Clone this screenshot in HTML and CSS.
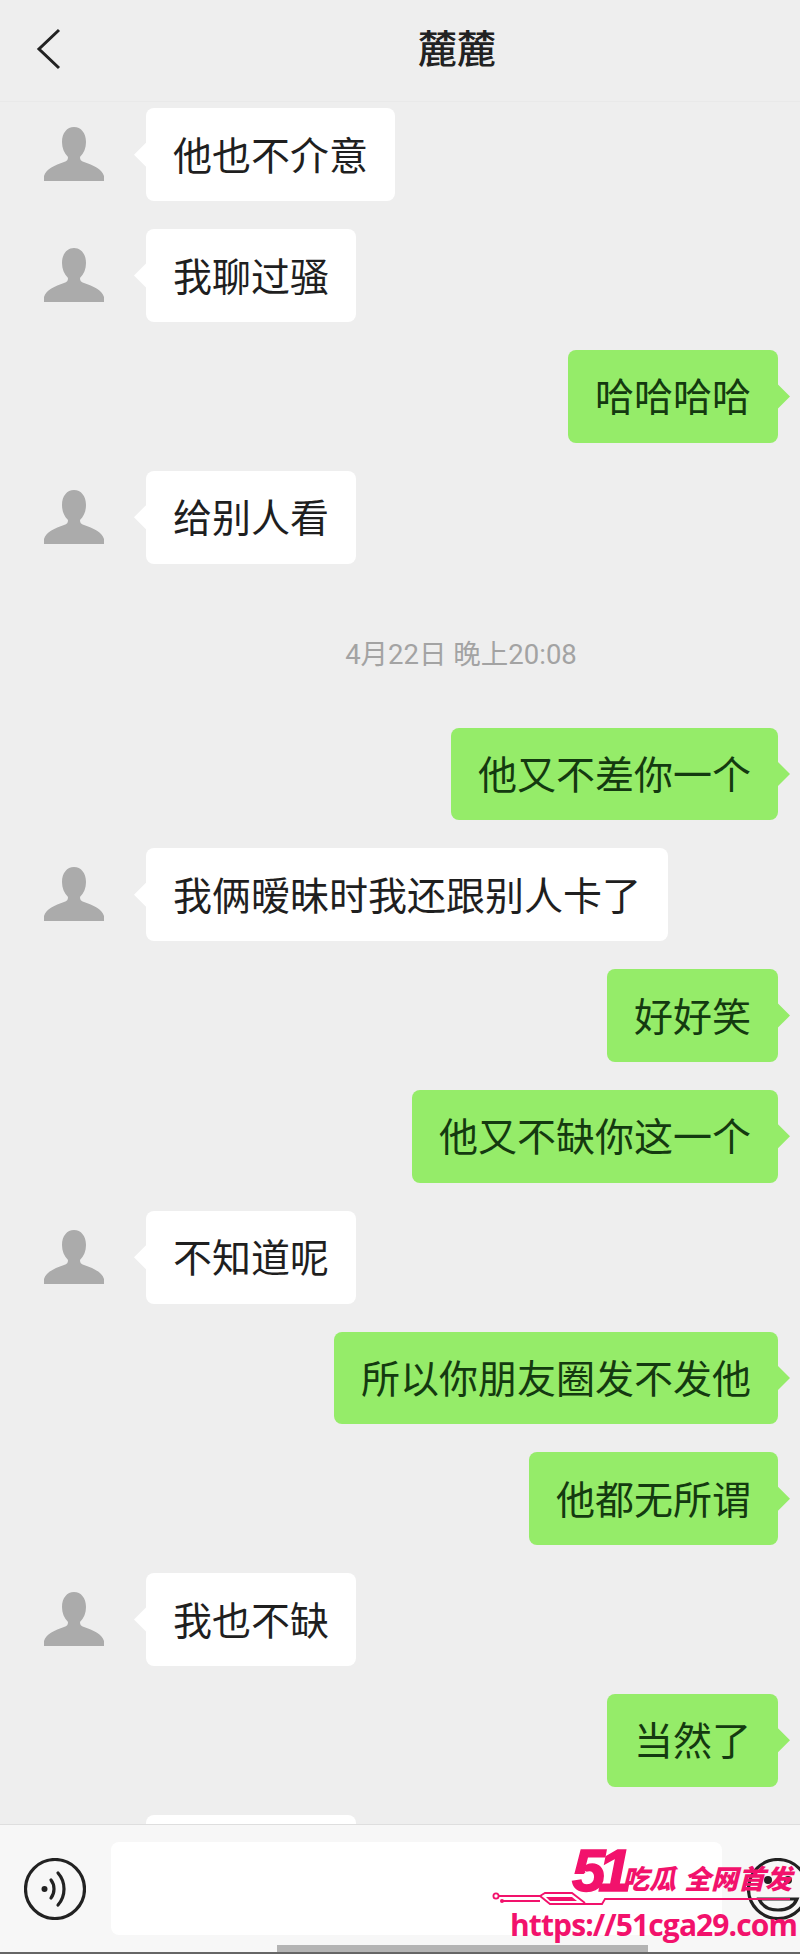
FILE: index.html
```html
<!DOCTYPE html>
<html lang="zh-CN">
<head>
<meta charset="utf-8">
<title>麓麓</title>
<link rel="stylesheet" href="styles.css">
</head>
<body>
<div class="phone">
  <header class="topbar">
    <svg class="back" viewBox="0 0 26 42" aria-hidden="true"><path d="M23 2 3 21 23 40"/></svg>
    <h1 class="title">麓麓</h1>
  </header>
  <main class="messages">
    <div class="msg in"><svg class="avatar" viewBox="0 0 60 54" aria-hidden="true"><path d="M30 0c7 0 12 6 12 15 0 6-2 11-6 15 0 3 1 4 4 5 9 3 18 7 20 14v5H0v-5c2-7 11-11 20-14 3-1 4-2 4-5-4-4-6-9-6-15C18 6 23 0 30 0z"/></svg><div class="bubble">他也不介意</div></div>
    <div class="msg in"><svg class="avatar" viewBox="0 0 60 54" aria-hidden="true"><path d="M30 0c7 0 12 6 12 15 0 6-2 11-6 15 0 3 1 4 4 5 9 3 18 7 20 14v5H0v-5c2-7 11-11 20-14 3-1 4-2 4-5-4-4-6-9-6-15C18 6 23 0 30 0z"/></svg><div class="bubble">我聊过骚</div></div>
    <div class="msg out"><div class="bubble">哈哈哈哈</div></div>
    <div class="msg in"><svg class="avatar" viewBox="0 0 60 54" aria-hidden="true"><path d="M30 0c7 0 12 6 12 15 0 6-2 11-6 15 0 3 1 4 4 5 9 3 18 7 20 14v5H0v-5c2-7 11-11 20-14 3-1 4-2 4-5-4-4-6-9-6-15C18 6 23 0 30 0z"/></svg><div class="bubble">给别人看</div></div>
    <div class="time">4月22日 晚上20:08</div>
    <div class="msg out"><div class="bubble">他又不差你一个</div></div>
    <div class="msg in"><svg class="avatar" viewBox="0 0 60 54" aria-hidden="true"><path d="M30 0c7 0 12 6 12 15 0 6-2 11-6 15 0 3 1 4 4 5 9 3 18 7 20 14v5H0v-5c2-7 11-11 20-14 3-1 4-2 4-5-4-4-6-9-6-15C18 6 23 0 30 0z"/></svg><div class="bubble">我俩暧昧时我还跟别人卡了</div></div>
    <div class="msg out"><div class="bubble">好好笑</div></div>
    <div class="msg out"><div class="bubble">他又不缺你这一个</div></div>
    <div class="msg in"><svg class="avatar" viewBox="0 0 60 54" aria-hidden="true"><path d="M30 0c7 0 12 6 12 15 0 6-2 11-6 15 0 3 1 4 4 5 9 3 18 7 20 14v5H0v-5c2-7 11-11 20-14 3-1 4-2 4-5-4-4-6-9-6-15C18 6 23 0 30 0z"/></svg><div class="bubble">不知道呢</div></div>
    <div class="msg out"><div class="bubble">所以你朋友圈发不发他</div></div>
    <div class="msg out"><div class="bubble">他都无所谓</div></div>
    <div class="msg in"><svg class="avatar" viewBox="0 0 60 54" aria-hidden="true"><path d="M30 0c7 0 12 6 12 15 0 6-2 11-6 15 0 3 1 4 4 5 9 3 18 7 20 14v5H0v-5c2-7 11-11 20-14 3-1 4-2 4-5-4-4-6-9-6-15C18 6 23 0 30 0z"/></svg><div class="bubble">我也不缺</div></div>
    <div class="msg out"><div class="bubble">当然了</div></div>
    <div class="msg in"><svg class="avatar" viewBox="0 0 60 54" aria-hidden="true"></svg><div class="bubble plain"></div></div>
  </main>
  <footer class="composer">
    <div class="inputrow">
      <svg class="icon" viewBox="0 0 62 62" aria-hidden="true">
        <circle cx="31" cy="31" r="29.5"/>
        <circle class="solid" cx="20.5" cy="31" r="3"/>
        <path d="M27 22c4 5 4 13 0 18"/>
        <path d="M34 15c8 9 8 23 0 32"/>
      </svg>
      <div class="input"></div>
      <svg class="icon" viewBox="0 0 62 62" aria-hidden="true">
        <circle cx="31" cy="31" r="29.5"/>
        <circle class="solid" cx="21" cy="22" r="4"/>
        <circle class="solid" cx="41" cy="22" r="4"/>
        <path d="M12 41h38c-3 7-10 11-19 11s-16-4-19-11z"/>
      </svg>
    </div>
    <div class="homebar"></div>
    <div class="watermark">
      <div class="wm-head">
        <span class="wm-num">51<svg class="wm-play" viewBox="0 0 14 14" aria-hidden="true"><path d="M2 1 13 7 2 13 5 7z"/></svg></span>
        <span class="wm-cn">吃瓜</span>
        <span class="wm-cn wm-second">全网首发</span>
      </div>
      <svg class="wm-line" viewBox="0 0 300 20" aria-hidden="true">
        <circle cx="6" cy="6" r="2.6"/>
        <path d="M9 6H50l10 8H112l3-5H300"/>
        <path d="M12 11H50"/>
        <path d="M50 6l5-3H82l13 10"/>
        <path class="fill" d="M56 7H82l5 4H60z"/>
        <circle class="fill" cx="12" cy="11" r="2"/>
      </svg>
      <div class="wm-url">https://51cga29.com</div>
    </div>
  </footer>
</div>
</body>
</html>
```

FILE: styles.css
```css
* { box-sizing: border-box; }

html, body {
  margin: 0;
  padding: 0;
  background: #eeeeee;
}

body {
  font-family: "Noto Sans CJK SC", "Liberation Sans", sans-serif;
  color: #1f1f1f;
}

.phone {
  height: 100vh;
  display: flex;
  flex-direction: column;
  overflow: hidden;
}

.topbar {
  height: 102px;
  flex: none;
  display: flex;
  align-items: center;
  padding: 0 0 6px 36px;
  background: #eeeeee;
  border-bottom: 1px solid #e9e9e9;
}

.back {
  width: 26px;
  height: 42px;
  flex: none;
  margin-top: 2px;
  fill: none;
  stroke: #222;
  stroke-width: 3;
}

.title {
  margin: -4px 0 0 356px;
  font-size: 39px;
  line-height: 50px;
  font-weight: 500;
  color: #222;
}

.messages {
  flex: 1;
  min-height: 0;
  overflow: hidden;
  display: flex;
  flex-direction: column;
  gap: 28px;
  padding-top: 6.4px;
  background: #eeeeee;
}

.msg {
  display: flex;
  flex: none;
  height: 92.8px;
}

.msg.in {
  padding-left: 44px;
  gap: 42px;
}

.msg.out {
  justify-content: flex-end;
  padding-right: 22px;
}

.avatar {
  width: 60px;
  height: 54px;
  flex: none;
  margin-top: 19px;
  fill: #ababab;
}

.bubble {
  position: relative;
  display: flex;
  align-items: center;
  height: 100%;
  padding: 0 27px 3px 27px;
  border-radius: 8px;
  font-size: 39px;
  line-height: 1;
  white-space: nowrap;
}

.bubble::before {
  content: "";
  position: absolute;
  top: 50%;
  width: 13px;
  height: 26px;
  margin-top: -13px;
}

.in .bubble {
  background: #fff;
}

.in .bubble::before {
  left: -12px;
  background: #fff;
  clip-path: polygon(100% 0, 0 50%, 100% 100%);
}

.in .bubble.plain {
  width: 210px;
}

.out .bubble {
  background: #95ec69;
  color: #143a10;
}

.out .bubble::before {
  right: -12px;
  background: #95ec69;
  clip-path: polygon(0 0, 100% 50%, 0 100%);
}

.time {
  flex: none;
  height: 108px;
  padding: 47px 0 0 122px;
  text-align: center;
  font-family: Roboto, "Noto Sans CJK SC", sans-serif;
  font-size: 27.5px;
  line-height: 32px;
  color: #a3a3a3;
}

.composer {
  position: relative;
  flex: none;
  height: 130px;
  background: #f7f7f7;
  border-top: 1px solid #dedede;
  overflow: hidden;
}

.inputrow {
  display: flex;
  align-items: center;
  gap: 25px;
  height: 93px;
  margin-top: 17px;
  padding-left: 24px;
}

.icon {
  width: 62px;
  height: 62px;
  flex: none;
  fill: none;
  stroke: #222;
  stroke-width: 3.2;
  stroke-linecap: round;
}

.icon .solid {
  fill: #222;
  stroke: none;
}

.input {
  width: 611px;
  height: 93px;
  flex: none;
  background: #fff;
  border-radius: 8px;
}

.homebar {
  position: absolute;
  left: 277px;
  bottom: 2px;
  width: 371px;
  height: 7px;
  background: #b4b4b4;
}

.composer::after {
  content: "";
  position: absolute;
  left: 0;
  right: 0;
  bottom: 0;
  height: 2px;
  background: #666;
}

.watermark {
  position: absolute;
  left: 490px;
  top: 23px;
  width: 306px;
  display: flex;
  flex-direction: column;
  color: #f2126c;
}

.wm-head {
  display: flex;
  align-items: flex-end;
  height: 45px;
  padding-left: 82px;
}

.wm-num {
  position: relative;
  width: 50px;
  font-family: "Liberation Sans", sans-serif;
  font-size: 60px;
  line-height: 45px;
  font-weight: 700;
  font-style: italic;
  letter-spacing: -7px;
  -webkit-text-stroke: 1.5px #f2126c;
}

.wm-play {
  position: absolute;
  left: 11px;
  top: 22px;
  width: 12px;
  height: 12px;
  fill: #fff;
}

.wm-cn {
  font-size: 27px;
  line-height: 30px;
  font-weight: 900;
  font-style: italic;
  white-space: nowrap;
}

.wm-second {
  margin-left: 8px;
}

.wm-line {
  display: block;
  width: 300px;
  height: 20px;
  margin-top: -3px;
  fill: none;
  stroke: #f2126c;
  stroke-width: 1.8;
}

.wm-line .fill {
  fill: #f2126c;
  stroke: none;
}

.wm-url {
  margin: -3px 0 0 20px;
  font-family: "Open Sans", sans-serif;
  font-size: 30px;
  line-height: 36px;
  font-weight: 700;
  letter-spacing: -0.9px;
  white-space: nowrap;
}
```
